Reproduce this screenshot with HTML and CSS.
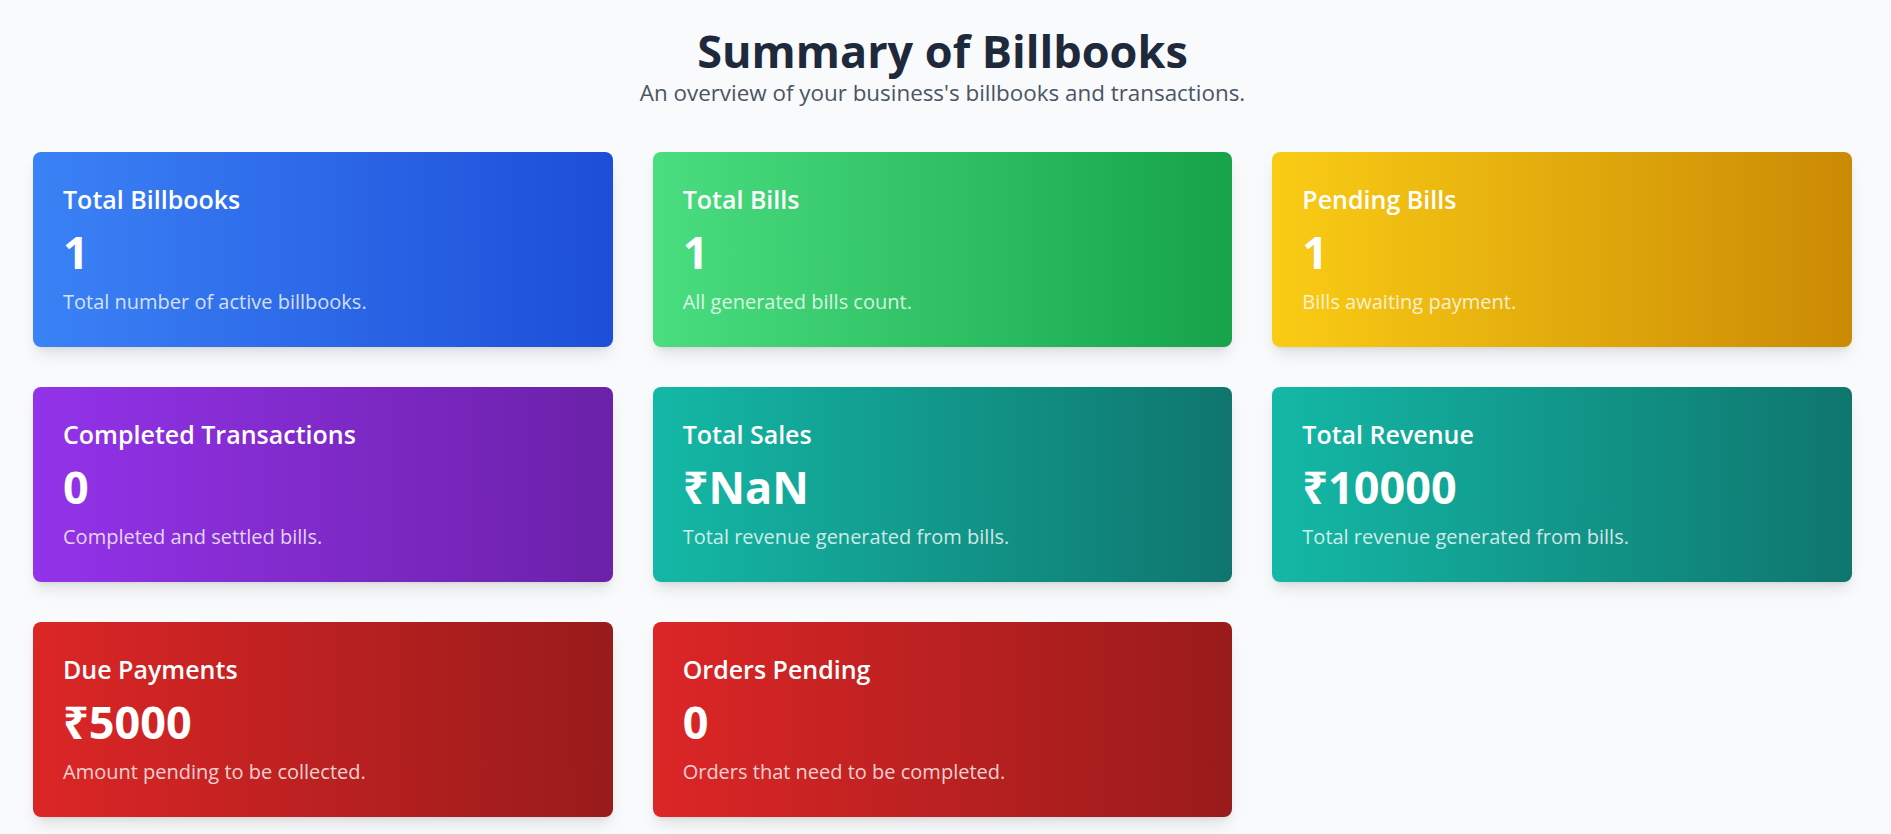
FILE: index.html
```html
<!DOCTYPE html>
<html lang="en">
<head>
<meta charset="utf-8">
<title>Summary of Billbooks</title>
<link rel="stylesheet" href="styles.css">
</head>
<body>
<main class="page">
  <header class="header">
    <h1 class="title">Summary of Billbooks</h1>
    <p class="subtitle">An overview of your business's billbooks and transactions.</p>
  </header>
  <section class="grid">
    <div class="card blue">
      <h2 class="card-title">Total Billbooks</h2>
      <p class="card-value">1</p>
      <p class="card-desc">Total number of active billbooks.</p>
    </div>
    <div class="card green">
      <h2 class="card-title">Total Bills</h2>
      <p class="card-value">1</p>
      <p class="card-desc">All generated bills count.</p>
    </div>
    <div class="card yellow">
      <h2 class="card-title">Pending Bills</h2>
      <p class="card-value">1</p>
      <p class="card-desc">Bills awaiting payment.</p>
    </div>
    <div class="card purple">
      <h2 class="card-title">Completed Transactions</h2>
      <p class="card-value">0</p>
      <p class="card-desc">Completed and settled bills.</p>
    </div>
    <div class="card teal">
      <h2 class="card-title">Total Sales</h2>
      <p class="card-value">₹NaN</p>
      <p class="card-desc">Total revenue generated from bills.</p>
    </div>
    <div class="card teal">
      <h2 class="card-title">Total Revenue</h2>
      <p class="card-value">₹10000</p>
      <p class="card-desc">Total revenue generated from bills.</p>
    </div>
    <div class="card red">
      <h2 class="card-title">Due Payments</h2>
      <p class="card-value">₹5000</p>
      <p class="card-desc">Amount pending to be collected.</p>
    </div>
    <div class="card red">
      <h2 class="card-title">Orders Pending</h2>
      <p class="card-value">0</p>
      <p class="card-desc">Orders that need to be completed.</p>
    </div>
  </section>
</main>
</body>
</html>
```

FILE: styles.css
```css
* { box-sizing: border-box; }
html, body { margin: 0; padding: 0; }
body {
  background: #f8fafc;
  font-family: "Open Sans", "Noto Sans", sans-serif;
  color: #1f2937;
}
.page {
  padding: 26px 39px 40px 33px;
}
.header {
  text-align: center;
  margin-bottom: 44px;
}
.title {
  margin: 0 0 2px;
  font-size: 45px;
  line-height: 49.5px;
  font-weight: 700;
  color: #1e293b;
}
.subtitle {
  margin: 0;
  font-size: 22.4px;
  line-height: 30.8px;
  color: #4b5563;
}
.grid {
  display: grid;
  grid-template-columns: repeat(3, 1fr);
  gap: 40px;
}
.card {
  border-radius: 8px;
  padding: 32px 30px 30px;
  color: #ffffff;
  box-shadow: 0 10px 15px -3px rgba(0,0,0,0.1), 0 4px 6px -4px rgba(0,0,0,0.1);
}
.card-title {
  margin: 0;
  font-size: 25px;
  line-height: 30px;
  font-weight: 600;
}
.card-value {
  margin: 11px 0 0;
  font-size: 45px;
  line-height: 54px;
  font-weight: 700;
}
.card-desc {
  margin: 8px 0 0;
  font-size: 20px;
  line-height: 30px;
  color: rgba(255,255,255,0.8);
}
.blue { background: linear-gradient(to right, #3b82f6, #1d4ed8); }
.green { background: linear-gradient(to right, #4ade80, #16a34a); }
.yellow { background: linear-gradient(to right, #facc15, #ca8a04); }
.purple { background: linear-gradient(to right, #9333ea, #6b21a8); }
.teal { background: linear-gradient(to right, #14b8a6, #0f766e); }
.red { background: linear-gradient(to right, #dc2626, #991b1b); }
```
